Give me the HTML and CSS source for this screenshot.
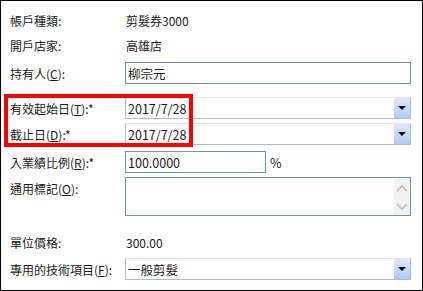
FILE: index.html
```html
<!DOCTYPE html>
<html lang="zh-Hant">
<head>
  <meta charset="UTF-8">
  <title>帳戶資料</title>
  <link rel="stylesheet" href="styles.css">
</head>
<body>
  <div class="form">
    <div class="row r1">
      <span class="label">帳戶種類:</span>
      <span class="value">剪髮券3000</span>
    </div>
    <div class="row r2">
      <span class="label">開戶店家:</span>
      <span class="value">高雄店</span>
    </div>
    <div class="row r3">
      <span class="label">持有人(<u>C</u>):</span>
      <div class="input wide">柳宗元</div>
    </div>
    <div class="row r4">
      <span class="label">有效起始日(<u>T</u>):*</span>
      <div class="combo"><span class="text">2017/7/28</span><span class="drop"></span></div>
    </div>
    <div class="row r5">
      <span class="label">截止日(<u>D</u>):*</span>
      <div class="combo"><span class="text">2017/7/28</span><span class="drop"></span></div>
    </div>
    <div class="row r6">
      <span class="label">入業績比例(<u>R</u>):*</span>
      <div class="input short">100.0000</div>
      <span class="unit">%</span>
    </div>
    <div class="row r7">
      <span class="label">通用標記(<u>O</u>):</span>
      <div class="memo">
        <div class="spin">
          <svg width="14" height="36" viewBox="0 0 14 36">
            <polyline points="2,12 7,7 12,12" fill="none" stroke="#c4c4c4" stroke-width="2"/>
            <polyline points="2,25 7,30 12,25" fill="none" stroke="#c4c4c4" stroke-width="2"/>
          </svg>
        </div>
      </div>
    </div>
    <div class="row r8">
      <span class="label">單位價格:</span>
      <span class="value">300.00</span>
    </div>
    <div class="row r9">
      <span class="label">專用的技術項目(<u>F</u>):</span>
      <div class="combo"><span class="text">一般剪髮</span><span class="drop"></span></div>
    </div>
    <div class="mark"></div>
  </div>
</body>
</html>
```

FILE: styles.css
```css
body {
  margin: 0;
  background: #fff;
}
.form {
  position: relative;
  width: 423px;
  height: 291px;
  box-sizing: border-box;
  border: 1px solid #000;
  padding: 7px 0 0 9px;
  font-family: "Noto Sans CJK TC", "Noto Sans", sans-serif;
  font-size: 12px;
  color: #1a1a1a;
}
.row {
  display: flex;
  align-items: center;
}
.label {
  width: 115px;
  flex: none;
  white-space: nowrap;
}
.value {
  padding-left: 1px;
}
.r1 { height: 24px; }
.r2 { height: 24px; margin-top: 1px; }
.r3 { height: 22px; margin-top: 5px; }
.r4 { height: 22px; margin-top: 13px; }
.r5 { height: 22px; margin-top: 4px; }
.r6 { height: 22px; margin-top: 6px; }
.r7 { height: 39px; margin-top: 4px; align-items: flex-start; }
.r7 .label { padding-top: 3px; }
.r8 { height: 24px; margin-top: 14px; }
.r9 { height: 22px; margin-top: 4px; }

.input {
  height: 22px;
  box-sizing: border-box;
  border: 1px solid #6f91c1;
  padding-left: 2px;
  display: flex;
  align-items: center;
  font-size: 12.5px;
}
.wide { width: 286px; }
.short { width: 141px; }
.unit {
  margin-left: 4px;
  font-size: 12.5px;
}
.combo {
  width: 286px;
  height: 22px;
  box-sizing: border-box;
  border: 1px solid #a9bcd9;
  border-top-color: #e4e6ea;
  display: flex;
  align-items: center;
  font-size: 12.5px;
}
.combo .text {
  flex: 1;
  padding-left: 2px;
}
.drop {
  width: 16px;
  height: 20px;
  background: linear-gradient(#dfe8fb, #b3cbf4);
  display: flex;
  align-items: center;
  justify-content: center;
}
.drop::after {
  content: "";
  border-left: 4px solid transparent;
  border-right: 4px solid transparent;
  border-top: 4px solid #000;
}
.memo {
  width: 286px;
  height: 39px;
  box-sizing: border-box;
  border: 1px solid #6f91c1;
  display: flex;
  justify-content: flex-end;
}
.spin {
  width: 16px;
  background: #f2f2f2;
  display: flex;
  align-items: center;
  justify-content: center;
}
.mark {
  position: absolute;
  left: 3px;
  top: 93px;
  width: 189px;
  height: 53px;
  box-sizing: border-box;
  border: 4px solid #f00;
}
```
